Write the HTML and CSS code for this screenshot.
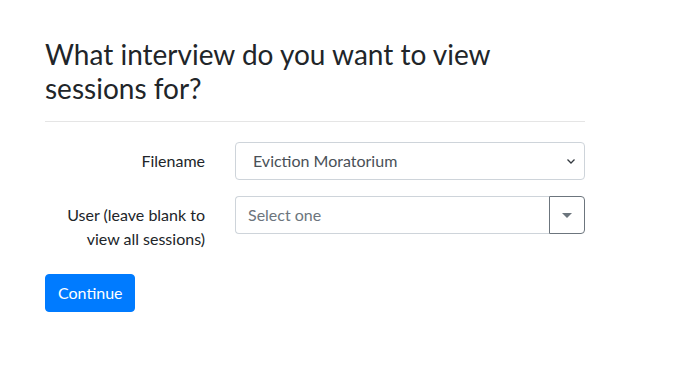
FILE: index.html
```html
<!DOCTYPE html>
<html lang="en">

<head>
    <title>Sessions</title>
    <meta charset="UTF-8">
    <link rel="stylesheet" href="styles.css">
</head>

<body>
    <div class="container">
        <h3 class="title">What interview do you want to view sessions for?</h3>
        <hr>
        <form>
            <div class="form-row">
                <label class="form-label" for="filename">Filename</label>
                <div class="form-field">
                    <div class="select-box">
                        <span class="select-value">Eviction Moratorium</span>
                        <svg class="chevron" width="10" height="8" viewBox="0 0 10 8">
                            <path d="M1.5 2.5 L5 6 L8.5 2.5" fill="none" stroke="#343a40" stroke-width="1.3"/>
                        </svg>
                    </div>
                </div>
            </div>
            <div class="form-row">
                <label class="form-label" for="user">User (leave blank to view all sessions)</label>
                <div class="form-field">
                    <div class="combo">
                        <input class="combo-input" id="user" type="text" placeholder="Select one">
                        <button type="button" class="combo-button">
                            <span class="caret"></span>
                        </button>
                    </div>
                </div>
            </div>
            <button type="button" class="btn-primary">Continue</button>
        </form>
    </div>
</body>

</html>
```

FILE: styles.css
```css
body {
    margin: 0;
    font-family: Lato, "Noto Sans", Arial, sans-serif;
    font-size: 16px;
    line-height: 1.5;
    color: #212529;
    background: #fff;
}

.container {
    width: 540px;
    padding: 38px 0 0 45px;
}

.title {
    font-size: 28px;
    font-weight: 400;
    line-height: 1.2;
    margin: 0 0 8px;
}

hr {
    margin: 16px 0 20px;
    border: 0;
    border-top: 1px solid rgba(0, 0, 0, 0.1);
}

.form-row {
    display: flex;
    gap: 30px;
    margin-bottom: 16px;
}

.form-label {
    width: 160px;
    text-align: right;
    padding: 7px 0;
    line-height: 24px;
}

.form-field {
    flex: 1;
}

.select-box {
    height: 38px;
    box-sizing: border-box;
    border: 1px solid #ced4da;
    border-radius: 4px;
    display: flex;
    align-items: center;
    justify-content: space-between;
    padding: 0 8px 0 17px;
    color: #495057;
}

.combo {
    display: flex;
    height: 38px;
}

.combo-input {
    flex: 1;
    min-width: 0;
    border: 1px solid #ced4da;
    border-right: 0;
    border-radius: 4px 0 0 4px;
    padding: 6px 12px;
    font: inherit;
    color: #495057;
}

.combo-input::placeholder {
    color: #6c757d;
}

.combo-button {
    width: 36px;
    border: 1px solid #6c757d;
    border-radius: 0 4px 4px 0;
    background: #fff;
    display: flex;
    align-items: center;
    justify-content: center;
    padding: 0;
}

.caret {
    width: 0;
    height: 0;
    border-left: 5px solid transparent;
    border-right: 5px solid transparent;
    border-top: 5px solid #6c757d;
}

.btn-primary {
    background-color: #007bff;
    color: #fff;
    border: 1px solid #007bff;
    border-radius: 4px;
    padding: 6px 12px;
    font: inherit;
    height: 38px;
    width: 90px;
}
```
